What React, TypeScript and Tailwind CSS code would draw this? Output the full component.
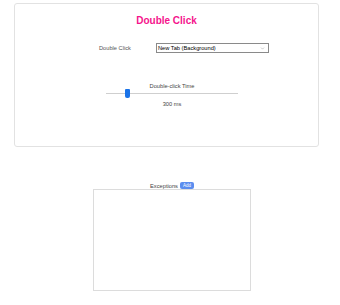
import { ChevronDown } from 'lucide-react';

export default function App() {
    return (
        <div className="w-[340px] h-[305px] bg-white overflow-hidden font-['Liberation_Sans',Arial,sans-serif]">
            {/* Settings card */}
            <div className="ml-[14px] mt-[3px] w-[305px] h-[144px] border border-[#e2e2e2] rounded-[3px] pt-[11px]">
                <h1 className="text-center text-[10px] leading-[12px] font-bold text-[#f5148c]">
                    Double Click
                </h1>

                <div className="mt-[16px] ml-[84px] flex items-center h-[10px]">
                    <span className="w-[57px] text-[5.7px] leading-[8px] text-[#555]">Double Click</span>
                    <div className="w-[113px] h-[10px] border border-[#8a8a8a] bg-white flex items-center justify-between pl-[1px] pr-[3px]">
                        <span className="text-[5.7px] leading-[8px] text-black">New Tab (Background)</span>
                        <ChevronDown size={5} strokeWidth={2} className="text-[#888]" />
                    </div>
                </div>

                {/* Slider */}
                <div className="mt-[29px] ml-[91px] w-[132px] flex flex-col items-center">
                    <span className="text-[5.7px] leading-[8px] text-[#444]">Double-click Time</span>
                    <div className="relative w-full h-[9px] -mt-[1px] flex items-center">
                        <div className="w-full h-[1px] bg-[#cfcfcf]" />
                        <div className="absolute left-[19px] top-0 w-[5px] h-[9px] rounded-[1px] rounded-b-[2px] bg-[#1a73e8]" />
                    </div>
                    <span className="mt-[2px] text-[5.7px] leading-[8px] text-[#444]">300 ms</span>
                </div>
            </div>

            {/* Exceptions */}
            <div className="mt-[34px] ml-[93px] w-[158px]">
                <div className="h-[8px] flex items-center justify-center gap-[2px]">
                    <span className="text-[5.7px] leading-[8px] text-[#444] mt-[1px]">Exceptions</span>
                    <button className="w-[14px] h-[7px] rounded-[2px] bg-[#5b8def] text-white text-[4.5px] leading-[7px] text-center">
                        Add
                    </button>
                </div>
                <div className="h-[102px] border border-[#dcdcdc] bg-white" />
            </div>
        </div>
    );
}
